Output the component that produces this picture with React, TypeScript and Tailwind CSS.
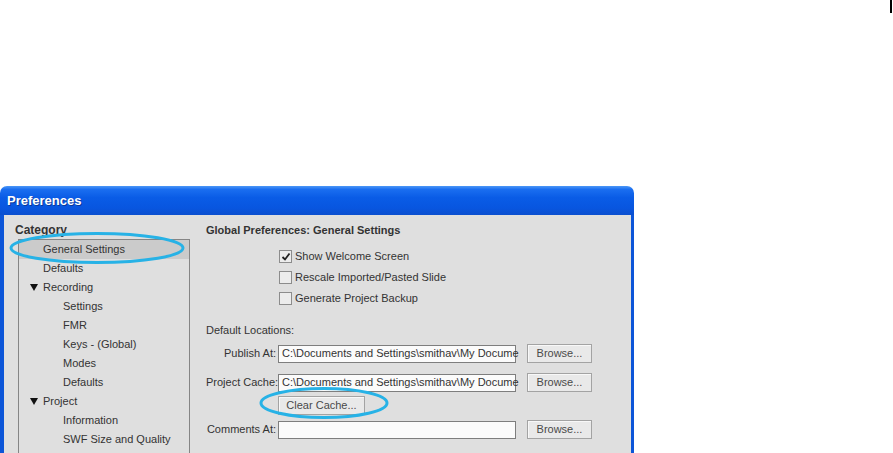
import React from "react";

const FONT = { fontFamily: '"Liberation Sans", Arial, sans-serif' };

function Tri() {
  return (
    <svg width="8" height="7" viewBox="0 0 8 7" className="shrink-0">
      <path d="M0 0 L8 0 L4 7 Z" fill="#111" />
    </svg>
  );
}

function Row({
  label,
  level,
  selected,
  arrow,
}: {
  label: string;
  level: number;
  selected?: boolean;
  arrow?: boolean;
}) {
  return (
    <div
      className={`h-[19px] flex items-center ${selected ? "bg-[#cbcbcb]" : ""}`}
    >
      <div className="w-[24px] flex justify-end pr-[5px]">{arrow ? <Tri /> : null}</div>
      <span className={level === 2 ? "pl-[20px]" : "pl-0"}>{label}</span>
    </div>
  );
}

function Check({ checked, label }: { checked?: boolean; label: string }) {
  return (
    <div className="h-[21px] flex items-center pl-[73px]">
      <div className="w-[13px] h-[13px] border border-[#8c8c8c] bg-[#ececec] flex items-center justify-center">
        {checked ? (
          <svg width="10" height="10" viewBox="0 0 10 10">
            <path d="M1.5 5 L4 7.5 L8.5 1.5" stroke="#222" strokeWidth="1.8" fill="none" />
          </svg>
        ) : null}
      </div>
      <span className="ml-[3px]">{label}</span>
    </div>
  );
}

function Btn({ label, w }: { label: string; w: string }) {
  return (
    <div
      className={`${w} h-[19px] border border-[#a3a3a3] bg-[#e9e9e9] flex items-center justify-center text-[#4a4a4a] shadow-[inset_1px_1px_0_#f8f8f8]`}
    >
      {label}
    </div>
  );
}

function Field({ value }: { value?: string }) {
  return (
    <div className="w-[238px] h-[18px] ml-[2px] border border-[#7e7e7e] bg-[#fbfbfb] flex items-center pl-[3px] whitespace-nowrap">
      {value}
    </div>
  );
}

export default function App() {
  return (
    <div
      className="w-[893px] h-[453px] bg-white overflow-hidden flex flex-col text-[11px] text-[#333]"
      style={FONT}
    >
      <div className="h-[186px] shrink-0 flex justify-end">
        <div className="w-[2px] h-[13px] bg-black mr-[1px]" />
      </div>
      <div className="relative w-[634px] flex-1 flex flex-col min-h-0">
        <div className="h-[29px] shrink-0 rounded-t-[7px] bg-[linear-gradient(180deg,#4b97f7_0%,#1a6ef0_12%,#0a5ce6_40%,#0856e0_75%,#0b4fcf_100%)] flex items-center pl-[7px]">
          <span className="text-white font-bold text-[13px] [text-shadow:1px_1px_0_#0b3a9a]">
            Preferences
          </span>
        </div>
        <div className="flex-1 flex border-l-[4px] border-r-[3px] border-[#0c55d8] bg-[#dfdfdf] min-h-0">
          <div className="w-[186px] shrink-0 pl-[11px] pt-[8px] flex flex-col">
            <div className="h-[15px] leading-[15px] font-bold text-[12px] text-[#333]">
              Category
            </div>
            <div className="ml-[3px] mt-[1px] flex-1 border-l border-t border-r border-[#858585] w-[172px]">
              <Row label="General Settings" level={1} selected />
              <Row label="Defaults" level={1} />
              <Row label="Recording" level={1} arrow />
              <Row label="Settings" level={2} />
              <Row label="FMR" level={2} />
              <Row label="Keys - (Global)" level={2} />
              <Row label="Modes" level={2} />
              <Row label="Defaults" level={2} />
              <Row label="Project" level={1} arrow />
              <Row label="Information" level={2} />
              <Row label="SWF Size and Quality" level={2} />
            </div>
          </div>
          <div className="flex-1 pl-[16px] pt-[8px] flex flex-col">
            <div className="h-[15px] leading-[15px] font-bold text-[11px] text-[#333]">
              Global Preferences: General Settings
            </div>
            <div className="mt-[8px] flex flex-col">
              <Check checked label="Show Welcome Screen" />
              <Check label="Rescale Imported/Pasted Slide" />
              <Check label="Generate Project Backup" />
            </div>
            <div className="mt-[14px] h-[15px] leading-[15px]">Default Locations:</div>
            <div className="mt-[6px] flex items-center">
              <div className="w-[70px] text-right whitespace-nowrap">Publish At:</div>
              <Field value="C:\Documents and Settings\smithav\My Docume" />
              <div className="ml-[11px]">
                <Btn label="Browse..." w="w-[65px]" />
              </div>
            </div>
            <div className="mt-[10px] flex items-center">
              <div className="w-[70px] text-right whitespace-nowrap">Project Cache:</div>
              <Field value="C:\Documents and Settings\smithav\My Docume" />
              <div className="ml-[11px]">
                <Btn label="Browse..." w="w-[65px]" />
              </div>
            </div>
            <div className="mt-[4px] flex items-center pl-[72px]">
              <Btn label="Clear Cache..." w="w-[87px]" />
            </div>
            <div className="mt-[5px] flex items-center">
              <div className="w-[70px] text-right whitespace-nowrap">Comments At:</div>
              <Field />
              <div className="ml-[11px]">
                <Btn label="Browse..." w="w-[65px]" />
              </div>
            </div>
          </div>
        </div>
        <svg
          className="absolute left-0 top-0 pointer-events-none"
          width="634"
          height="267"
          viewBox="0 0 634 267"
        >
          <ellipse cx="97" cy="62" rx="86" ry="14.5" fill="none" stroke="#27b2e6" strokeWidth="3" />
          <ellipse cx="324" cy="217" rx="63" ry="14.5" fill="none" stroke="#27b2e6" strokeWidth="3" />
        </svg>
      </div>
    </div>
  );
}
